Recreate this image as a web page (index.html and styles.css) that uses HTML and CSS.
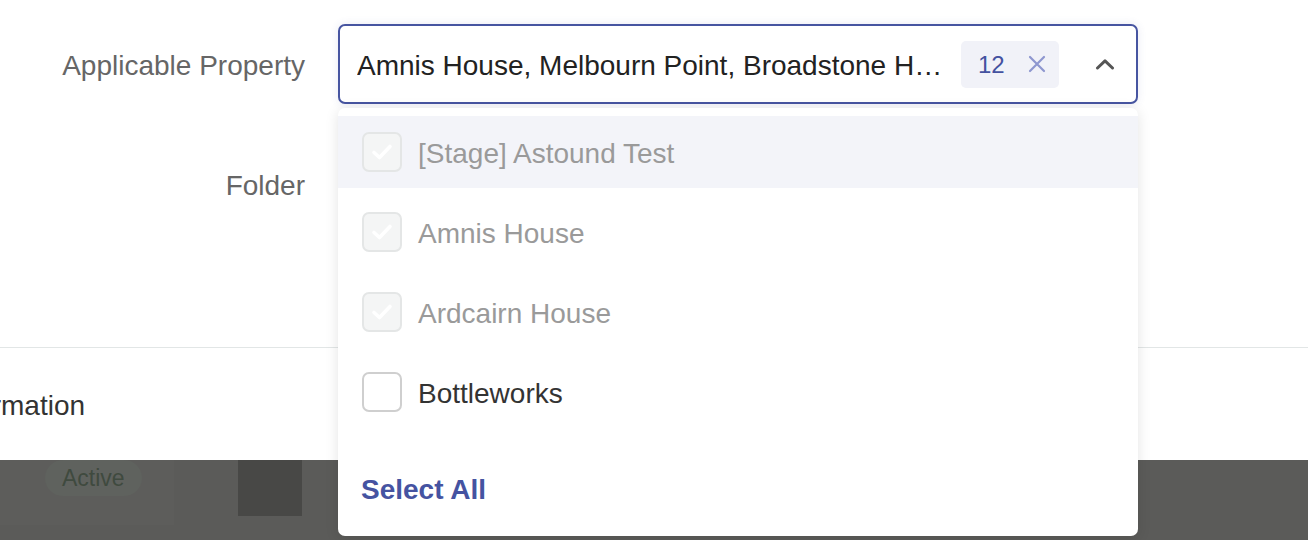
FILE: index.html
```html
<!DOCTYPE html>
<html lang="en">
<head>
<meta charset="utf-8">
<title>Applicable Property</title>
<link rel="stylesheet" href="styles.css">
</head>
<body>
<div class="page">
  <div class="form">
    <div class="row">
      <div class="label">Applicable Property</div>
      <div class="field">
        <div class="select">
          <span class="select-text">Amnis House, Melbourn Point, Broadstone House, Bottleworks, Ardcairn House</span>
          <span class="tag">
            <span class="tag-count">12</span>
            <svg class="tag-x" width="18" height="18" viewBox="0 0 18 18"><path d="M2 2L16 16M16 2L2 16" stroke="#8e97cf" stroke-width="2.2" stroke-linecap="round"/></svg>
          </span>
          <svg class="chevron" width="20" height="12" viewBox="0 0 20 12"><path d="M2.5 10L10 2.8L17.5 10" fill="none" stroke="#555" stroke-width="3" stroke-linecap="round" stroke-linejoin="round"/></svg>
        </div>
      </div>
    </div>
    <div class="row">
      <div class="label">Folder</div>
      <div class="field"></div>
    </div>
  </div>
  <div class="divider"></div>
  <div class="section-title"><span class="section-text">Information</span></div>
  <div class="backdrop">
    <div class="cell">
      <span class="pill">Active</span>
    </div>
    <div class="thumb"></div>
  </div>

  <div class="dropdown">
    <ul class="options">
      <li class="option active disabled">
        <span class="box checked"><svg width="22" height="18" viewBox="0 0 22 18"><path d="M3 9.5L8.5 14.5L19 3.5" fill="none" stroke="#fff" stroke-width="3.6" stroke-linecap="round" stroke-linejoin="round"/></svg></span>
        <span class="opt-text">[Stage] Astound Test</span>
      </li>
      <li class="option disabled">
        <span class="box checked"><svg width="22" height="18" viewBox="0 0 22 18"><path d="M3 9.5L8.5 14.5L19 3.5" fill="none" stroke="#fff" stroke-width="3.6" stroke-linecap="round" stroke-linejoin="round"/></svg></span>
        <span class="opt-text">Amnis House</span>
      </li>
      <li class="option disabled">
        <span class="box checked"><svg width="22" height="18" viewBox="0 0 22 18"><path d="M3 9.5L8.5 14.5L19 3.5" fill="none" stroke="#fff" stroke-width="3.6" stroke-linecap="round" stroke-linejoin="round"/></svg></span>
        <span class="opt-text">Ardcairn House</span>
      </li>
      <li class="option">
        <span class="box"></span>
        <span class="opt-text">Bottleworks</span>
      </li>
    </ul>
    <div class="footer"><span class="select-all">Select All</span></div>
  </div>
</div>
</body>
</html>
```
FILE: styles.css
```css
* { box-sizing: border-box; }
html, body { margin: 0; padding: 0; }
body {
  font-family: "Liberation Sans", Arial, Helvetica, sans-serif;
  background: #fff;
  color: #333;
  width: 1308px;
  height: 540px;
  overflow: hidden;
}
.page {
  position: relative;
  width: 1308px;
  height: 540px;
  overflow: hidden;
}
.form {
  padding-top: 24px;
  display: flex;
  flex-direction: column;
  gap: 40px;
}
.row {
  display: flex;
  align-items: center;
  height: 80px;
  gap: 33px;
}
.label {
  width: 305px;
  text-align: right;
  font-size: 28px;
  color: #666;
  line-height: 32px;
  padding-top: 4px;
}
.field {
  width: 800px;
}
.select {
  height: 80px;
  border: 2px solid #4755a1;
  border-radius: 7px;
  display: flex;
  align-items: center;
  padding: 0 21px 0 17px;
  box-shadow: 0 0 8px rgba(71, 85, 161, 0.12);
  background: #fff;
}
.select-text {
  flex: 1;
  min-width: 0;
  white-space: nowrap;
  overflow: hidden;
  text-overflow: ellipsis;
  font-size: 28px;
  color: #222;
  line-height: 34px;
  padding-top: 3px;
}
.tag {
  margin-left: 14px;
  width: 98px;
  height: 47px;
  background: #f1f2f8;
  border-radius: 5px;
  display: flex;
  align-items: center;
  padding-left: 17px;
  flex: none;
}
.tag-count {
  font-size: 24px;
  color: #4452a0;
  line-height: 28px;
  padding-top: 2px;
}
.tag-x {
  margin-left: 23px;
  flex: none;
}
.chevron {
  margin-left: 36px;
  flex: none;
}
.divider {
  margin-top: 123px;
  height: 1px;
  background: #e2e6e6;
}
.section-title {
  padding-top: 42px;
  padding-bottom: 38px;
  overflow: hidden;
  white-space: nowrap;
  line-height: 32px;
  height: 112px;
}
.section-text {
  display: inline-block;
  margin-left: -55px;
  font-size: 28px;
  color: #333;
}
.backdrop {
  height: 80px;
  background: #5b5b59;
  display: flex;
  align-items: flex-start;
}
.cell {
  width: 174px;
  height: 65px;
  background: #5d5d5b;
  padding-left: 45px;
}
.pill {
  display: inline-flex;
  align-items: center;
  height: 36px;
  padding: 0 17px;
  border-radius: 18px;
  background: #5f625e;
  color: #3f4a3f;
  font-size: 23px;
}
.thumb {
  margin-left: 64px;
  width: 64px;
  height: 56px;
  background: #484846;
}
.dropdown {
  position: absolute;
  left: 338px;
  top: 108px;
  width: 800px;
  height: 428px;
  background: #fff;
  border-radius: 7px;
  box-shadow: 0 2px 14px rgba(0, 0, 0, 0.11);
  padding-top: 8px;
}
.options {
  list-style: none;
  margin: 0;
  padding: 0;
  display: flex;
  flex-direction: column;
  gap: 8px;
}
.option {
  height: 72px;
  display: flex;
  align-items: center;
  padding-left: 24px;
  gap: 16px;
}
.option.active {
  background: #f3f4f9;
}
.box {
  width: 40px;
  height: 40px;
  border: 2px solid #cfcfcf;
  border-radius: 7px;
  background: #fff;
  display: flex;
  align-items: center;
  justify-content: center;
  flex: none;
}
.box.checked {
  border-color: #e4e6e6;
  background: #f4f5f5;
}
.opt-text {
  font-size: 28px;
  line-height: 32px;
  color: #333;
  padding-top: 4px;
}
.option.disabled .opt-text {
  color: #9a9a9a;
}
.footer {
  margin-top: 24px;
  height: 72px;
  display: flex;
  align-items: center;
  padding-left: 23px;
}
.select-all {
  font-size: 28px;
  font-weight: bold;
  color: #4553a1;
  line-height: 32px;
  padding-top: 4px;
}
```
